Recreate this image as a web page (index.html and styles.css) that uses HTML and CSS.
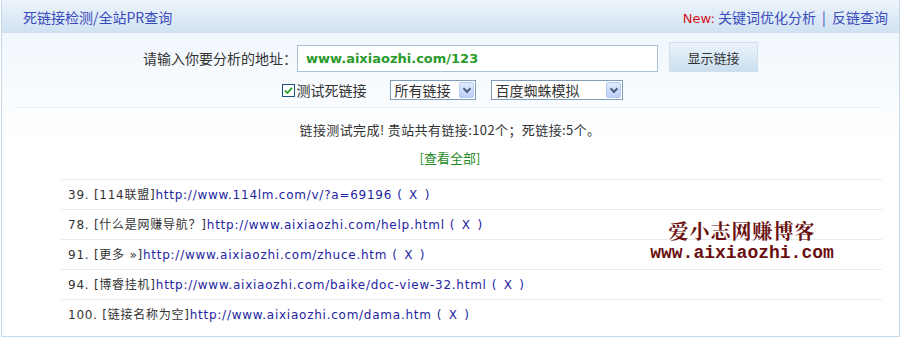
FILE: index.html
```html
<!DOCTYPE html>
<html lang="zh-CN">
<head>
    <meta charset="UTF-8">
    <title>死链接检测/全站PR查询</title>
    <link rel="stylesheet" href="styles.css">
</head>
<body>
    <div class="panel">
        <div class="panel-head">
            <span class="head-title">死链接检测/全站PR查询</span>
            <span class="head-links"><em>New:</em> 关键词优化分析 <i>|</i> 反链查询</span>
        </div>

        <div class="panel-body">
            <div class="form-row">
                <label class="url-label">请输入你要分析的地址：</label>
                <div class="url-input">www.aixiaozhi.com/123</div>
                <button class="show-btn">显示链接</button>
            </div>
            <div class="form-row opts">
                <span class="check">
                    <svg width="11" height="11" viewBox="0 0 11 11"><path d="M2 5.5 L4.3 8 L9 2.8" fill="none" stroke="#21a121" stroke-width="1.8"/></svg>
                </span>
                <span class="check-text">测试死链接</span>
                <div class="select sel-type"><span>所有链接</span><b class="arrow"></b></div>
                <div class="select sel-agent"><span>百度蜘蛛模拟</span><b class="arrow"></b></div>
            </div>

            <div class="result">
                <p class="summary">链接测试完成! 贵站共有链接:102个；死链接:5个。</p>
                <p class="view-all">[查看全部]</p>
            </div>

            <ul class="dead-list">
                <li><span class="num">39.</span> [114联盟]<a>http://www.114lm.com/v/?a=69196</a><a class="del">( X )</a></li>
                <li><span class="num">78.</span> [什么是网赚导航？]<a>http://www.aixiaozhi.com/help.html</a><a class="del">( X )</a></li>
                <li><span class="num">91.</span> [更多 »]<a>http://www.aixiaozhi.com/zhuce.htm</a><a class="del">( X )</a></li>
                <li><span class="num">94.</span> [博睿挂机]<a>http://www.aixiaozhi.com/baike/doc-view-32.html</a><a class="del">( X )</a></li>
                <li><span class="num">100.</span> [链接名称为空]<a>http://www.aixiaozhi.com/dama.htm</a><a class="del">( X )</a></li>
                <div class="stamp">
                    <div class="stamp-cn">爱小志网赚博客</div>
                    <div class="stamp-en">www.aixiaozhi.com</div>
                </div>
            </ul>
        </div>
    </div>
</body>
</html>
```

FILE: styles.css
```css
body {
    margin: 0;
    padding: 0;
    background: #fff;
    font-family: "DejaVu Sans", "Noto Sans CJK SC", sans-serif;
    color: #333;
}

.panel {
    width: 897px;
    height: 336px;
    margin-left: 1px;
    border: 1px solid #c4d8ea;
    border-top: none;
    box-sizing: content-box;
}

.panel-head {
    height: 33px;
    display: flex;
    align-items: center;
    justify-content: space-between;
    padding: 0 11px 0 21px;
    background: linear-gradient(#eef5fc, #cfe1f1);
    font-family: "Noto Sans CJK SC", sans-serif;
    font-size: 14px;
    color: #3a4cbc;
}

.head-links em {
    font-style: normal;
    color: #d8121c;
    font-family: "DejaVu Sans", sans-serif;
    font-size: 13px;
}

.head-links i {
    font-style: normal;
    margin: 0 3px;
}

.panel-body {
    height: 303px;
    background: linear-gradient(#f0f7fd 0, #fff 110px);
    position: relative;
}

.form-row {
    display: flex;
    justify-content: center;
    align-items: center;
    padding-left: 3px;
}

.form-row:first-child {
    padding-top: 11px;
    padding-left: 0;
}

.url-label {
    font-family: "Noto Sans CJK SC", sans-serif;
    font-size: 14px;
    color: #333;
}

.url-input {
    width: 351px;
    height: 25px;
    line-height: 25px;
    padding-left: 8px;
    border: 1px solid #a9c2d9;
    background: #fff;
    color: #2a9a2a;
    font-weight: bold;
    font-size: 13px;
}

.show-btn {
    width: 89px;
    height: 30px;
    margin-left: 11px;
    margin-top: -2px;
    border: 1px solid #cfdfec;
    background: linear-gradient(#eaf3fb, #cbdfef);
    font-family: "Noto Sans CJK SC", sans-serif;
    font-size: 13px;
    color: #333;
    padding: 0;
}

.opts {
    margin-top: 8px;
    height: 20px;
}

.check {
    width: 11px;
    height: 11px;
    border: 1px solid #1c5180;
    background: #fff;
    display: flex;
}

.check-text {
    font-family: "Noto Sans CJK SC", sans-serif;
    font-size: 14px;
    margin-left: 2px;
    margin-right: 23px;
}

.select {
    height: 18px;
    border: 1px solid #7f9db9;
    background: #fff;
    display: flex;
    align-items: center;
    justify-content: space-between;
    font-family: "Noto Sans CJK SC", sans-serif;
    font-size: 14px;
    padding: 0 1px 0 4px;
}

.sel-type {
    width: 79px;
    margin-right: 15px;
}

.sel-agent {
    width: 125px;
}

.arrow {
    width: 15px;
    height: 16px;
    border: 1px solid #b6c9ef;
    border-radius: 2px;
    background: linear-gradient(#e2ebfc, #bacffa);
    position: relative;
    box-sizing: border-box;
}

.arrow::after {
    content: "";
    position: absolute;
    left: 4px;
    top: 3px;
    width: 4px;
    height: 4px;
    border-right: 2px solid #4d6185;
    border-bottom: 2px solid #4d6185;
    transform: rotate(45deg);
}

.result {
    margin: 7px 17px 0 16px;
    border-top: 1px solid #e6edf3;
    text-align: center;
    font-family: "Noto Sans CJK SC", sans-serif;
    font-size: 13px;
}

.summary {
    margin: 0;
    padding-top: 13px;
    line-height: 18px;
    letter-spacing: 0.4px;
}

.view-all {
    margin: 0;
    padding-top: 10px;
    line-height: 18px;
    color: #268a26;
    font-size: 13px;
}

.dead-list {
    list-style: none;
    margin: 12px 17px 0 59px;
    padding: 0;
    border-top: 1px solid #e6ebef;
    position: relative;
}

.dead-list li {
    height: 29px;
    line-height: 31px;
    padding-left: 7px;
    border-bottom: 1px solid #e6ebef;
    font-size: 12px;
    letter-spacing: 0.75px;
    font-family: "DejaVu Sans", "Noto Sans CJK SC", sans-serif;
}

.dead-list li:last-of-type {
    border-bottom: none;
}

.dead-list a {
    color: #2424a0;
}

.dead-list .del {
    margin-left: 5px;
    word-spacing: 2px;
}

.stamp {
    position: absolute;
    left: 587px;
    top: 39px;
    width: 188px;
    text-align: center;
    color: #6a1010;
    font-weight: bold;
}

.stamp-cn {
    font-family: "Noto Serif CJK SC", "Noto Sans CJK SC", serif;
    font-size: 20px;
    line-height: 24px;
    letter-spacing: 1px;
}

.stamp-en {
    font-family: "Liberation Mono", monospace;
    font-size: 18px;
    line-height: 20px;
}
```
